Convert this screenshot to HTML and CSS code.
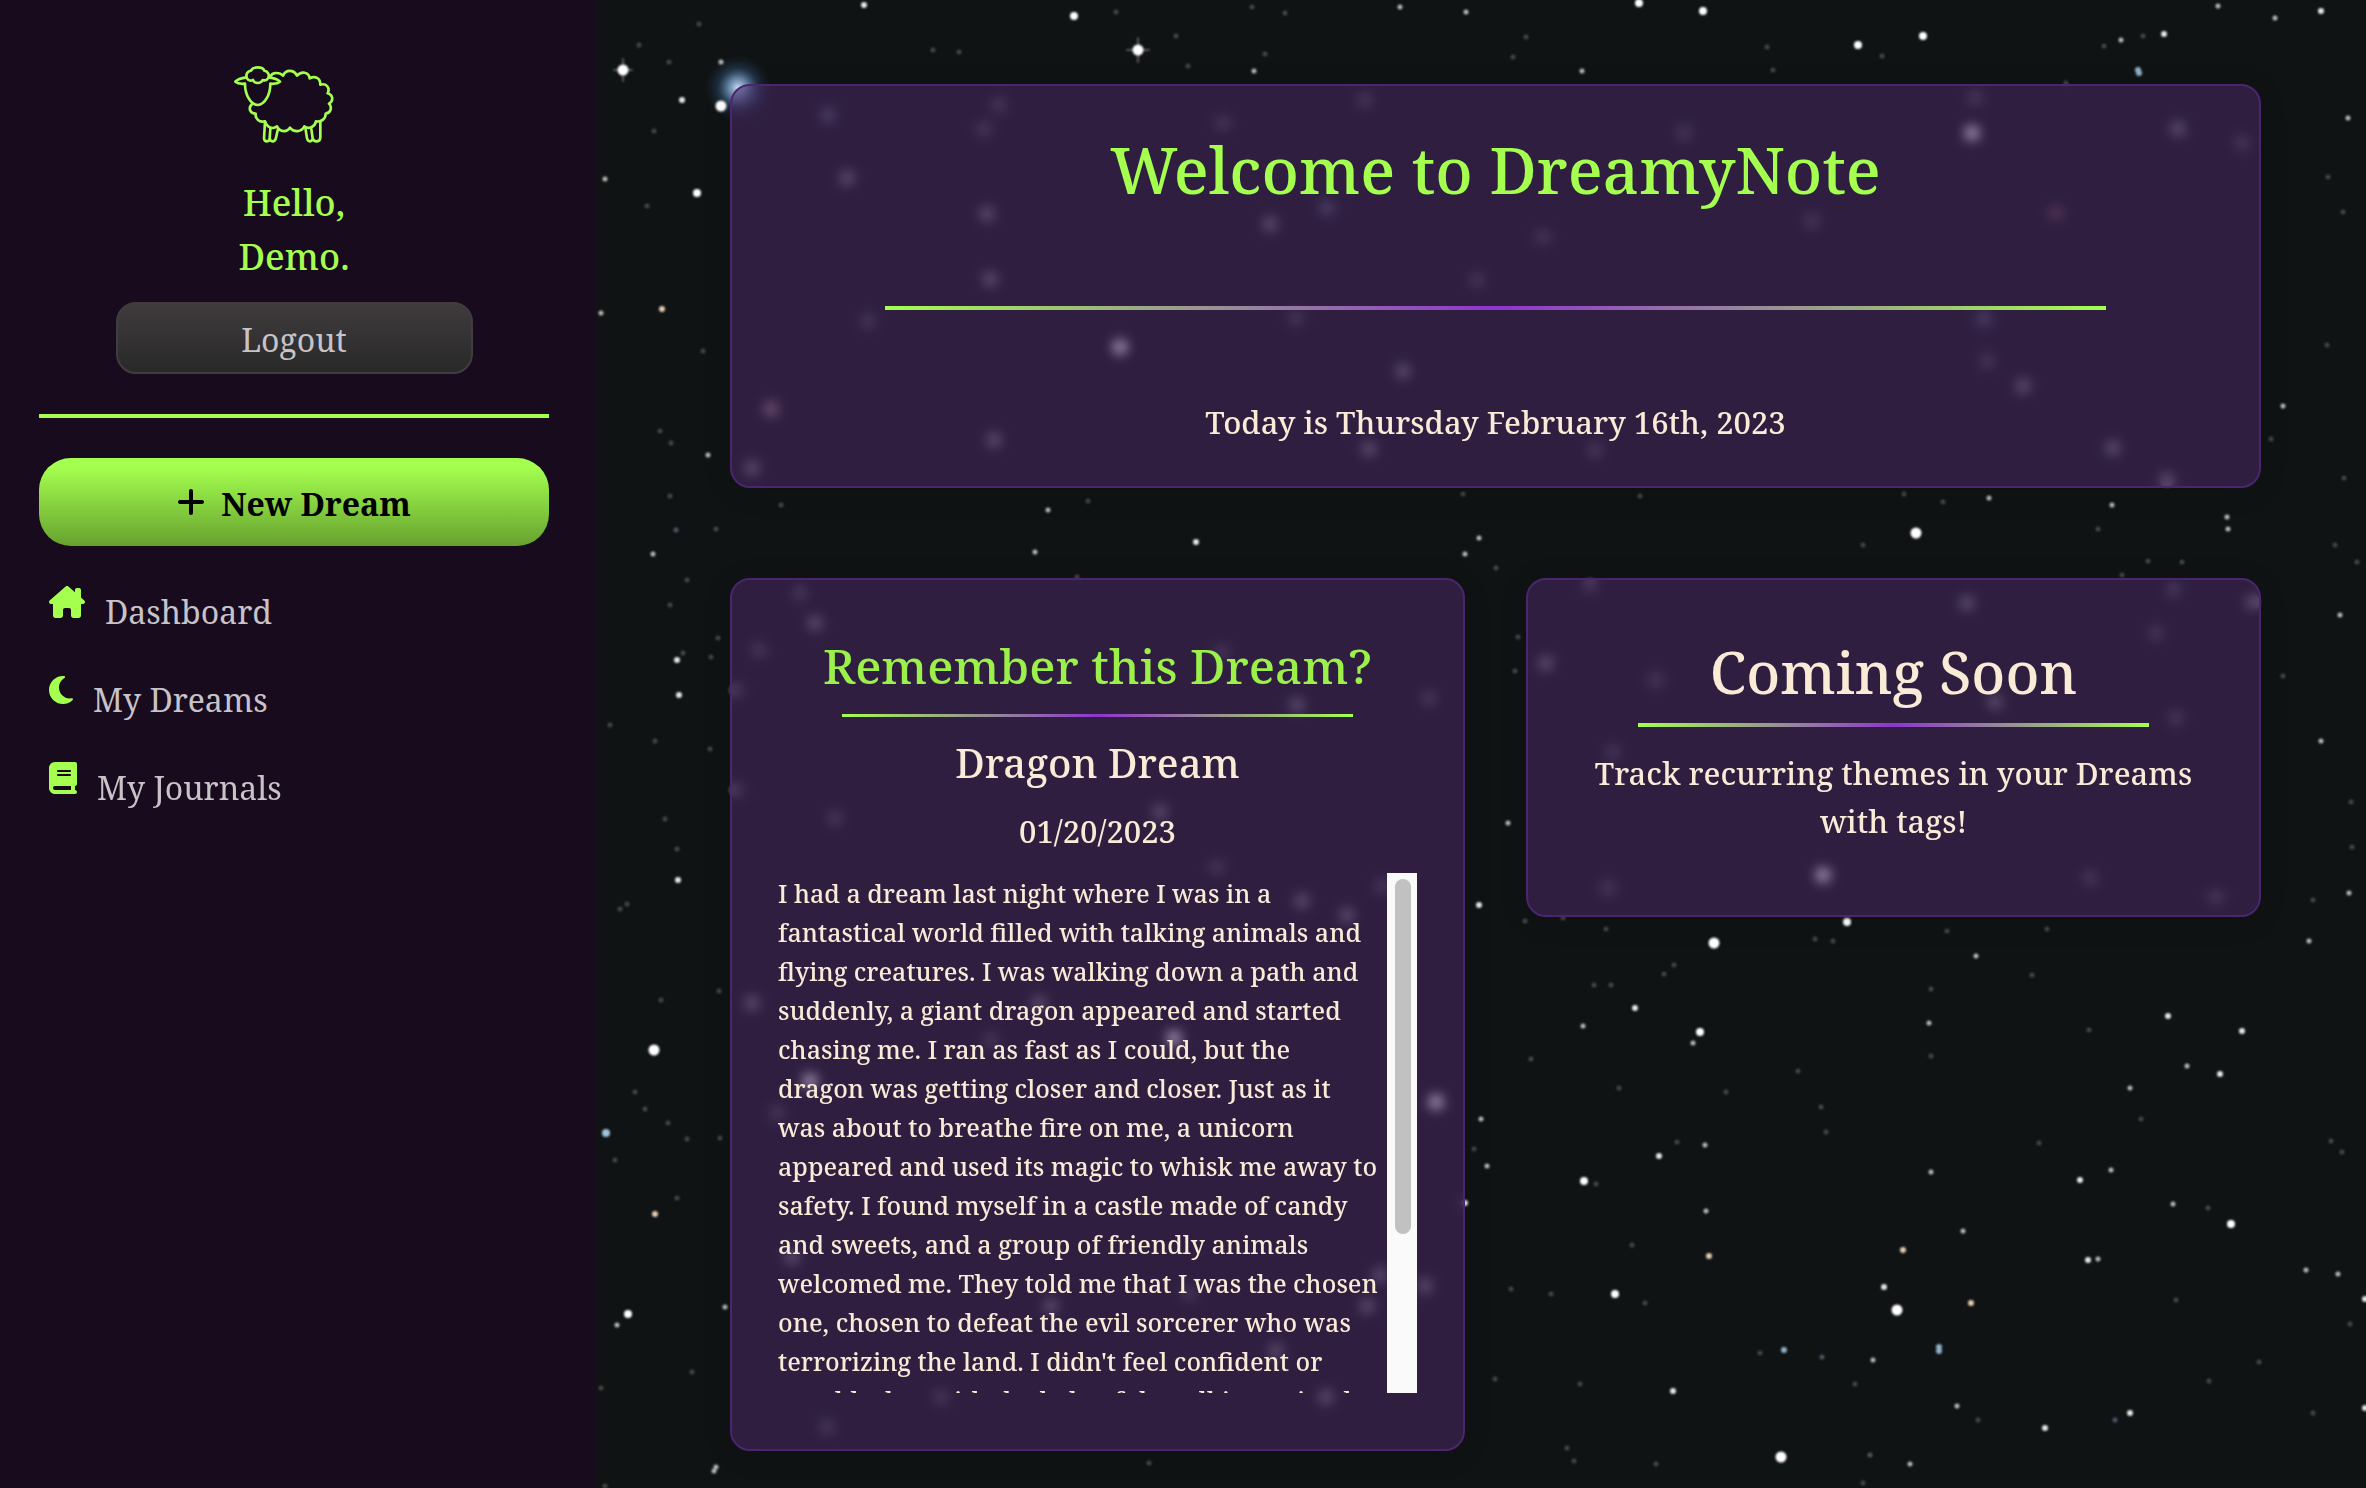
FILE: index.html
```html
<!DOCTYPE html>
<html lang="en">
<head>
<meta charset="utf-8">
<meta name="viewport" content="width=device-width, initial-scale=1">
<title>DreamyNote</title>
<link rel="stylesheet" href="styles.css">
</head>
<body>
<svg class="sky" viewBox="0 0 2366 1488" preserveAspectRatio="xMinYMin slice" aria-hidden="true">
  <defs>
    <radialGradient id="nebula">
      <stop offset="0" stop-color="#cfe4ff"/>
      <stop offset=".3" stop-color="#6f93b8" stop-opacity=".85"/>
      <stop offset=".6" stop-color="#2c4a6c" stop-opacity=".5"/>
      <stop offset="1" stop-color="#16283c" stop-opacity="0"/>
    </radialGradient>
  </defs>
  <circle cx="738" cy="88" r="34" fill="url(#nebula)"/>
  <g class="stars">
    <path class="star-giant" d="M1120 347h0M1972 133h0M1823 875h0M810 1081h0M1174 1038h0M1436 1102h0"/>
    <path class="star-giant dim" d="M847 178h0M990 279h0M987 214h0M1270 224h0M994 440h0M752 468h0M1369 449h0M1403 371h0M2178 129h0M2023 386h0M2113 448h0M2167 480h0M1297 705h0M1302 901h0M1347 915h0M1546 663h0M1967 603h0M815 623h0M1039 1003h0M1051 1306h0M1425 1286h0M1276 1351h0M752 1003h0M1326 1397h0M1380 1275h0M2253 602h0M1995 702h0M792 1257h0M1160 812h0M1367 1306h0M771 409h0"/>
    <path class="star-giant faint" d="M984 129h0M999 105h0M1365 100h0M868 321h0M1223 123h0M1296 318h0M1477 280h0M1975 98h0M1987 361h0M1595 450h0M1543 237h0M1812 221h0M1684 133h0M2242 143h0M800 593h0M759 650h0M1217 867h0M835 818h0M1382 886h0M736 790h0M736 690h0M1429 698h0M1222 652h0M777 1113h0M991 1040h0M941 1397h0M827 1427h0M1189 1293h0M2176 718h0M1608 888h0M2156 633h0M2174 590h0M1656 680h0M1613 752h0M2090 878h0M2216 897h0M1590 585h0"/>
    <path class="star-giant blue dim" d="M828 115h0M1327 208h0M1984 319h0"/>
    <path class="star-giant red dim" d="M2056 213h0M771 409h0"/>
    <path class="star-xl" d="M623 70h0M1138 50h0M721 106h0M1916 533h0M1714 943h0M1897 1310h0M1781 1457h0M654 1050h0"/>
    <path class="star-spike" d="M614 70h18M623 59v22M1127 50h22M1138 38v24"/>
    <path class="star-l" d="M697 193h0M1074 16h0M1858 45h0M1923 36h0M1703 11h0M1639 3h0M1700 1032h0M1584 1181h0M1615 1294h0M2231 1224h0M628 1314h0M1847 922h0"/>
    <path class="star-m" d="M864 5h0M682 100h0M679 695h0M677 660h0M678 880h0M1479 905h0M1465 1203h0M1635 1008h0M1659 1156h0M2242 1031h0M2220 1074h0M2080 1180h0M1884 1287h0M1673 1391h0M2045 1428h0M2130 1413h0M2088 1260h0M1196 542h0M2164 34h0M2321 11h0M2365 1299h0M2365 1408h0M2168 1016h0"/>
    <path class="star-s" d="M1254 71h0M1400 7h0M1466 12h0M721 62h0M605 179h0M601 313h0M653 554h0M1048 510h0M1035 552h0M1479 538h0M1465 554h0M1582 71h0M2121 40h0M2218 6h0M2275 18h0M2348 118h0M2283 406h0M1989 498h0M2112 505h0M2227 517h0M2228 529h0M2340 615h0M2321 741h0M1508 823h0M1976 956h0M2309 941h0M2349 893h0M1583 1026h0M1693 1043h0M1929 1023h0M2187 1066h0M2130 1088h0M1481 1119h0M1705 1145h0M1487 1166h0M1931 1172h0M2111 1170h0M2173 1204h0M1706 1211h0M1963 1231h0M2098 1259h0M2306 1270h0M2338 1274h0M1873 1360h0M1957 1406h0M1910 1464h0M617 1325h0M725 1307h0M714 1471h0M716 1467h0M708 455h0"/>
    <path class="star-s faint" d="M699 24h0M1116 12h0M670 496h0M1463 494h0M781 505h0M703 351h0M933 50h0M959 52h0M1188 66h0M1176 36h0M1252 7h0M1265 54h0M669 62h0M654 131h0M639 45h0M647 206h0M660 431h0M671 443h0M1088 501h0M1285 13h0M716 529h0M1513 57h0M1526 37h0M1767 47h0M1773 70h0M1882 56h0M2104 46h0M2143 36h0M2066 83h0M2343 212h0M2328 177h0M2327 345h0M2271 439h0M2344 478h0M1863 545h0M1904 494h0M1943 502h0M1640 496h0M2335 545h0M2098 529h0M687 580h0M670 605h0M718 638h0M711 657h0M683 653h0M610 725h0M655 741h0M710 749h0M665 819h0M677 849h0M627 904h0M620 909h0M719 991h0M661 1000h0M635 1092h0M720 1138h0M687 1139h0M668 1123h0M645 1109h0M615 1160h0M677 1198h0M692 1372h0M601 1388h0M605 1486h0M1077 577h0M2283 676h0M1518 637h0M1515 671h0M1931 989h0M2313 900h0M2352 847h0M2351 802h0M2047 929h0M1664 974h0M1674 965h0M1611 985h0M1594 985h0M1815 939h0M1833 941h0M2032 975h0M1947 931h0M1563 918h0M1606 929h0M1525 921h0M2122 575h0M2148 561h0M2182 562h0M2357 562h0M1496 568h0M1531 1059h0M1798 1071h0M1726 1092h0M1619 1088h0M1821 1107h0M1931 1056h0M1826 1132h0M1596 1184h0M2208 1208h0M1645 1303h0M2176 1300h0M2350 1324h0M1760 1353h0M1855 1384h0M1580 1384h0M1978 1420h0M1863 1483h0M1656 1464h0M1567 1448h0M1574 1461h0M2313 1413h0M2259 1362h0M2209 1381h0M2331 1141h0M2342 1152h0M1632 1245h0M1677 1142h0M2141 1119h0M2039 1143h0M2089 1030h0M1551 1294h0M1511 1289h0M1495 1379h0M1474 1149h0M1149 1463h0"/>
    <path class="star-m blue" d="M2138 70h0M2139 73h0M1784 1350h0M1939 1347h0M1939 1351h0"/>
    <path class="star-l blue" d="M606 1133h0"/>
    <path class="star-s blue dim" d="M676 530h0M1822 1357h0M2115 1420h0M1870 1455h0"/>
    <path class="star-m warm" d="M662 309h0M655 1214h0M1903 1250h0M1709 1256h0M1971 1303h0"/>
  </g>
</svg>

<div class="layout">
  <aside class="sidebar">
    <svg class="sheep" viewBox="40 42 366 237" role="img" aria-label="DreamyNote sheep">
      <path d="M82 82C76 68 86 60 94 59C99 46 129 46 134 59C142 60 152 70 145 82C140 90 134 89 129 87C123 99 105 99 100 87C94 90 86 89 82 82Z"/>
      <path d="M80 79C66 81 54 84 47 92C53 98 66 99 76 98C76 130 92 161 114 162C136 161 152 130 152 98C162 99 175 98 181 92C174 84 162 81 148 79"/>
      <path d="M152 76C158 63 180 63 190 74C198 55 222 55 232 74C244 60 268 62 270 82C286 74 302 80 302 101C320 96 332 110 324 127C341 132 342 150 328 158C338 168 334 186 318 188C318 204 304 214 289 211C286 228 266 236 254 226C246 244 222 245 211 230C202 245 182 244 172 226C160 236 142 230 136 211C118 216 106 202 108 188C92 188 84 172 97 159"/>
      <path d="M136 212L133 262Q134 271 142 271Q150 271 150 262L152 234M150 262Q152 272 160 271Q167 270 169 260L175 234M257 230L262 262Q264 271 271 271Q279 270 279 262L275 234M279 262Q282 272 292 271Q301 271 302 260V212"/>
    </svg>
    <p class="greeting">Hello,<br>Demo.</p>
    <button class="logout" type="button">Logout</button>
    <hr class="sidebar-rule">
    <button class="new-dream" type="button">
      <svg class="plus" viewBox="0 0 448 512" aria-hidden="true"><path d="M256 80c0-17.700-14.300-32-32-32s-32 14.300-32 32V224H48c-17.700 0-32 14.300-32 32s14.300 32 32 32H192V432c0 17.700 14.300 32 32 32s32-14.300 32-32V288H400c17.700 0 32-14.300 32-32s-14.300-32-32-32H256V80z"/></svg>
      <span>New Dream</span>
    </button>
    <nav class="nav">
      <a href="#dashboard"><svg viewBox="0 0 576 512" aria-hidden="true"><path d="M575.800 255.500c0 18-15 32.100-32 32.100h-32l.7 160.200c0 2.700-.2 5.400-.5 8.100V472c0 22.100-17.900 40-40 40H456 416 392c-22.100 0-40-17.900-40-40V448 384c0-17.700-14.300-32-32-32H256c-17.700 0-32 14.300-32 32v64 24c0 22.100-17.900 40-40 40H160 104c-22.100 0-40-17.900-40-40V360V287.600H32c-18 0-32-14-32-32.100c0-9 3-17 10-24L266.400 8c7-7 15-8 22-8s15 2 21 7L416 100.700V64c0-17.700 14.300-32 32-32h32c17.700 0 32 14.300 32 32V185l52.800 46.400c8 7 12 15 11 24z"/></svg><span>Dashboard</span></a>
      <a href="#dreams"><svg viewBox="0 0 384 512" aria-hidden="true"><path d="M223.500 32C100 32 0 132.300 0 256S100 480 223.500 480c60.600 0 115.500-24.200 155.800-63.400c5-4.900 6.300-12.500 3.100-18.700s-10.100-9.700-17-8.500c-9.800 1.700-19.800 2.600-30.100 2.600c-96.900 0-175.500-78.800-175.500-176c0-65.800 36-123.100 89.300-153.300c6.100-3.500 9.200-10.500 7.700-17.300s-7.300-11.900-14.300-12.500c-6.300-.5-12.600-.8-19-.8z"/></svg><span>My Dreams</span></a>
      <a href="#journals"><svg viewBox="0 0 448 512" aria-hidden="true"><path d="M96 0C43 0 0 43 0 96V416c0 53 43 96 96 96H384h32c17.700 0 32-14.300 32-32s-14.300-32-32-32V384c17.700 0 32-14.300 32-32V32c0-17.700-14.300-32-32-32H384 96zm0 384H352v64H96c-17.700 0-32-14.300-32-32s14.300-32 32-32zm32-240c0-8.800 7.200-16 16-16H336c8.800 0 16 7.200 16 16s-7.200 16-16 16H144c-8.800 0-16-7.200-16-16zm16 48H336c8.800 0 16 7.200 16 16s-7.200 16-16 16H144c-8.800 0-16-7.200-16-16s7.200-16 16-16z"/></svg><span>My Journals</span></a>
    </nav>
  </aside>

  <main class="main">
    <section class="card welcome">
      <h1>Welcome to DreamyNote</h1>
      <hr class="rule">
      <p class="lead">Today is Thursday February 16th, 2023</p>
    </section>
    <section class="card memory">
      <h2>Remember this Dream?</h2>
      <hr class="rule thin">
      <h3>Dragon Dream</h3>
      <p class="lead">01/20/2023</p>
      <div class="entry">
        <p class="entry-text" tabindex="0">I had a dream last night where I was in a<br>fantastical world filled with talking animals and<br>flying creatures. I was walking down a path and<br>suddenly, a giant dragon appeared and started<br>chasing me. I ran as fast as I could, but the<br>dragon was getting closer and closer. Just as it<br>was about to breathe fire on me, a unicorn<br>appeared and used its magic to whisk me away to<br>safety. I found myself in a castle made of candy<br>and sweets, and a group of friendly animals<br>welcomed me. They told me that I was the chosen<br>one, chosen to defeat the evil sorcerer who was<br>terrorizing the land. I didn't feel confident or<br>capable, but with the help of the talking animals</p>
        <div class="scrollbar" aria-hidden="true"><div class="thumb"></div></div>
      </div>
    </section>
    <section class="card soon">
      <h2>Coming Soon</h2>
      <hr class="rule">
      <p class="lead">Track recurring themes in your Dreams with tags!</p>
    </section>
  </main>
</div>
</body>
</html>
```
FILE: styles.css
```css
:root {
  --lime: #a4ff4f;
  --cream: #faebd7;
  --violet: #8e35cf;
}

* { box-sizing: border-box; }

body {
  margin: 0;
  background: #101313;
  color: var(--cream);
  font-family: "Noto Serif", "DejaVu Serif Condensed", "Liberation Serif", serif;
}

h1, h2, h3, p, hr { margin: 0; font-weight: 500; }
hr { border: 0; }
button { font-family: inherit; cursor: pointer; }

/* night sky */
.sky {
  position: fixed;
  inset: 0;
  z-index: -1;
  width: 100%;
  height: 100%;
}
.stars {
  fill: none;
  stroke: #fff;
  stroke-linecap: round;
  filter: blur(1px);
}
.star-giant { stroke-width: 15px; }
.star-xl { stroke-width: 11px; }
.star-l { stroke-width: 8px; }
.star-m { stroke-width: 6px; opacity: .9; }
.star-s { stroke-width: 5px; opacity: .7; }
.star-spike { stroke-width: 2px; opacity: .3; }
.dim { opacity: .4; }
.faint { opacity: .22; }
.blue { stroke: #9fc4de; }
.red { stroke: #d08a7c; }
.warm { stroke: #ffe2c2; }

.layout {
  display: grid;
  grid-template-columns: 595px minmax(0, 1fr);
  min-height: 100vh;
}

/* sidebar */
.sidebar {
  display: flex;
  flex-direction: column;
  align-items: center;
  padding: 65px 46px 40px 39px;
  background: #180b1e;
}
.sheep {
  width: 122px;
  height: 79px;
  fill: none;
  stroke: var(--lime);
  stroke-width: 8px;
  stroke-linejoin: round;
  stroke-linecap: round;
}
.greeting {
  margin-top: 32px;
  color: var(--lime);
  font-size: 36px;
  line-height: 54px;
  text-align: center;
}
.logout {
  width: 70%;
  height: 72px;
  margin-top: 18px;
  padding: 4px 0 0;
  border: 2px solid #3f3d3d;
  border-radius: 20px;
  background: linear-gradient(#3f3b3c, #292929);
  color: #c8c3c8;
  font-size: 32px;
  line-height: 48px;
}
.sidebar-rule {
  width: 100%;
  height: 4px;
  margin: 40px 0;
  background: var(--lime);
}
.new-dream {
  display: flex;
  align-items: center;
  justify-content: center;
  gap: 16px;
  width: 100%;
  height: 88px;
  padding: 0;
  border: 0;
  border-radius: 32px;
  background: linear-gradient(#a4ff4f 10%, #67a12f);
  color: #000;
  font-size: 32px;
  font-weight: 700;
  line-height: 48px;
}
.new-dream span { padding-top: 4px; }
.plus { width: 28px; height: 32px; }
.nav {
  display: flex;
  flex-direction: column;
  gap: 38px;
  align-self: stretch;
  margin-top: 40px;
  padding-left: 10px;
}
.nav a {
  display: flex;
  align-items: flex-start;
  gap: 20px;
  color: #c8c3c8;
  font-size: 32px;
  line-height: 48px;
  text-decoration: none;
}
.nav svg { height: 32px; fill: var(--lime); }
.nav span { padding-top: 2px; }

/* dashboard */
.main {
  display: grid;
  grid-template-columns: repeat(2, minmax(0, 1fr));
  gap: 90px 61px;
  align-items: start;
  align-content: start;
  padding: 84px 105px 37px 135px;
}
.card {
  display: flex;
  flex-direction: column;
  align-items: center;
  border: 2px solid #4c2570;
  border-radius: 20px;
  background: rgba(78, 41, 110, .5);
  box-shadow: 0 4px 30px rgba(0, 0, 0, .1);
  backdrop-filter: blur(6px);
  text-align: center;
}
.rule {
  width: 80%;
  height: 4px;
  background: linear-gradient(to right, var(--lime), var(--violet), var(--lime));
}
.thin { height: 3px; }
.lead { font-size: 31px; line-height: 48px; }

.welcome { grid-column: 1 / -1; padding: 36px 0 40px; }
.welcome h1 { color: var(--lime); font-size: 64px; line-height: 96px; }
.welcome .rule { margin: 88px 0; }

.memory { padding: 50px 46px 56px; }
.memory h2 { color: #9cf04a; font-size: 48px; line-height: 72px; }
.memory .rule { margin: 12px 0 16px; }
.memory h3 { font-size: 40px; line-height: 60px; }
.memory .lead { margin-top: 14px; }

.entry {
  display: flex;
  width: 100%;
  height: 520px;
  margin-top: 18px;
}
.entry-text {
  flex: 1;
  min-width: 0;
  padding-top: 1px;
  overflow-y: auto;
  scrollbar-width: none;
  font-size: 25px;
  line-height: 39px;
  text-align: left;
  white-space: nowrap;
}
.scrollbar {
  flex: none;
  width: 30px;
  padding: 6px 6px 0 8px;
  background: #fafafa;
}
.thumb {
  height: 69%;
  border-radius: 8px;
  background: #c1c1c1;
}

.soon { padding: 50px 46px 70px; }
.soon h2 { font-size: 58px; line-height: 84px; }
.soon .rule { margin: 9px 0 22px; }
```
